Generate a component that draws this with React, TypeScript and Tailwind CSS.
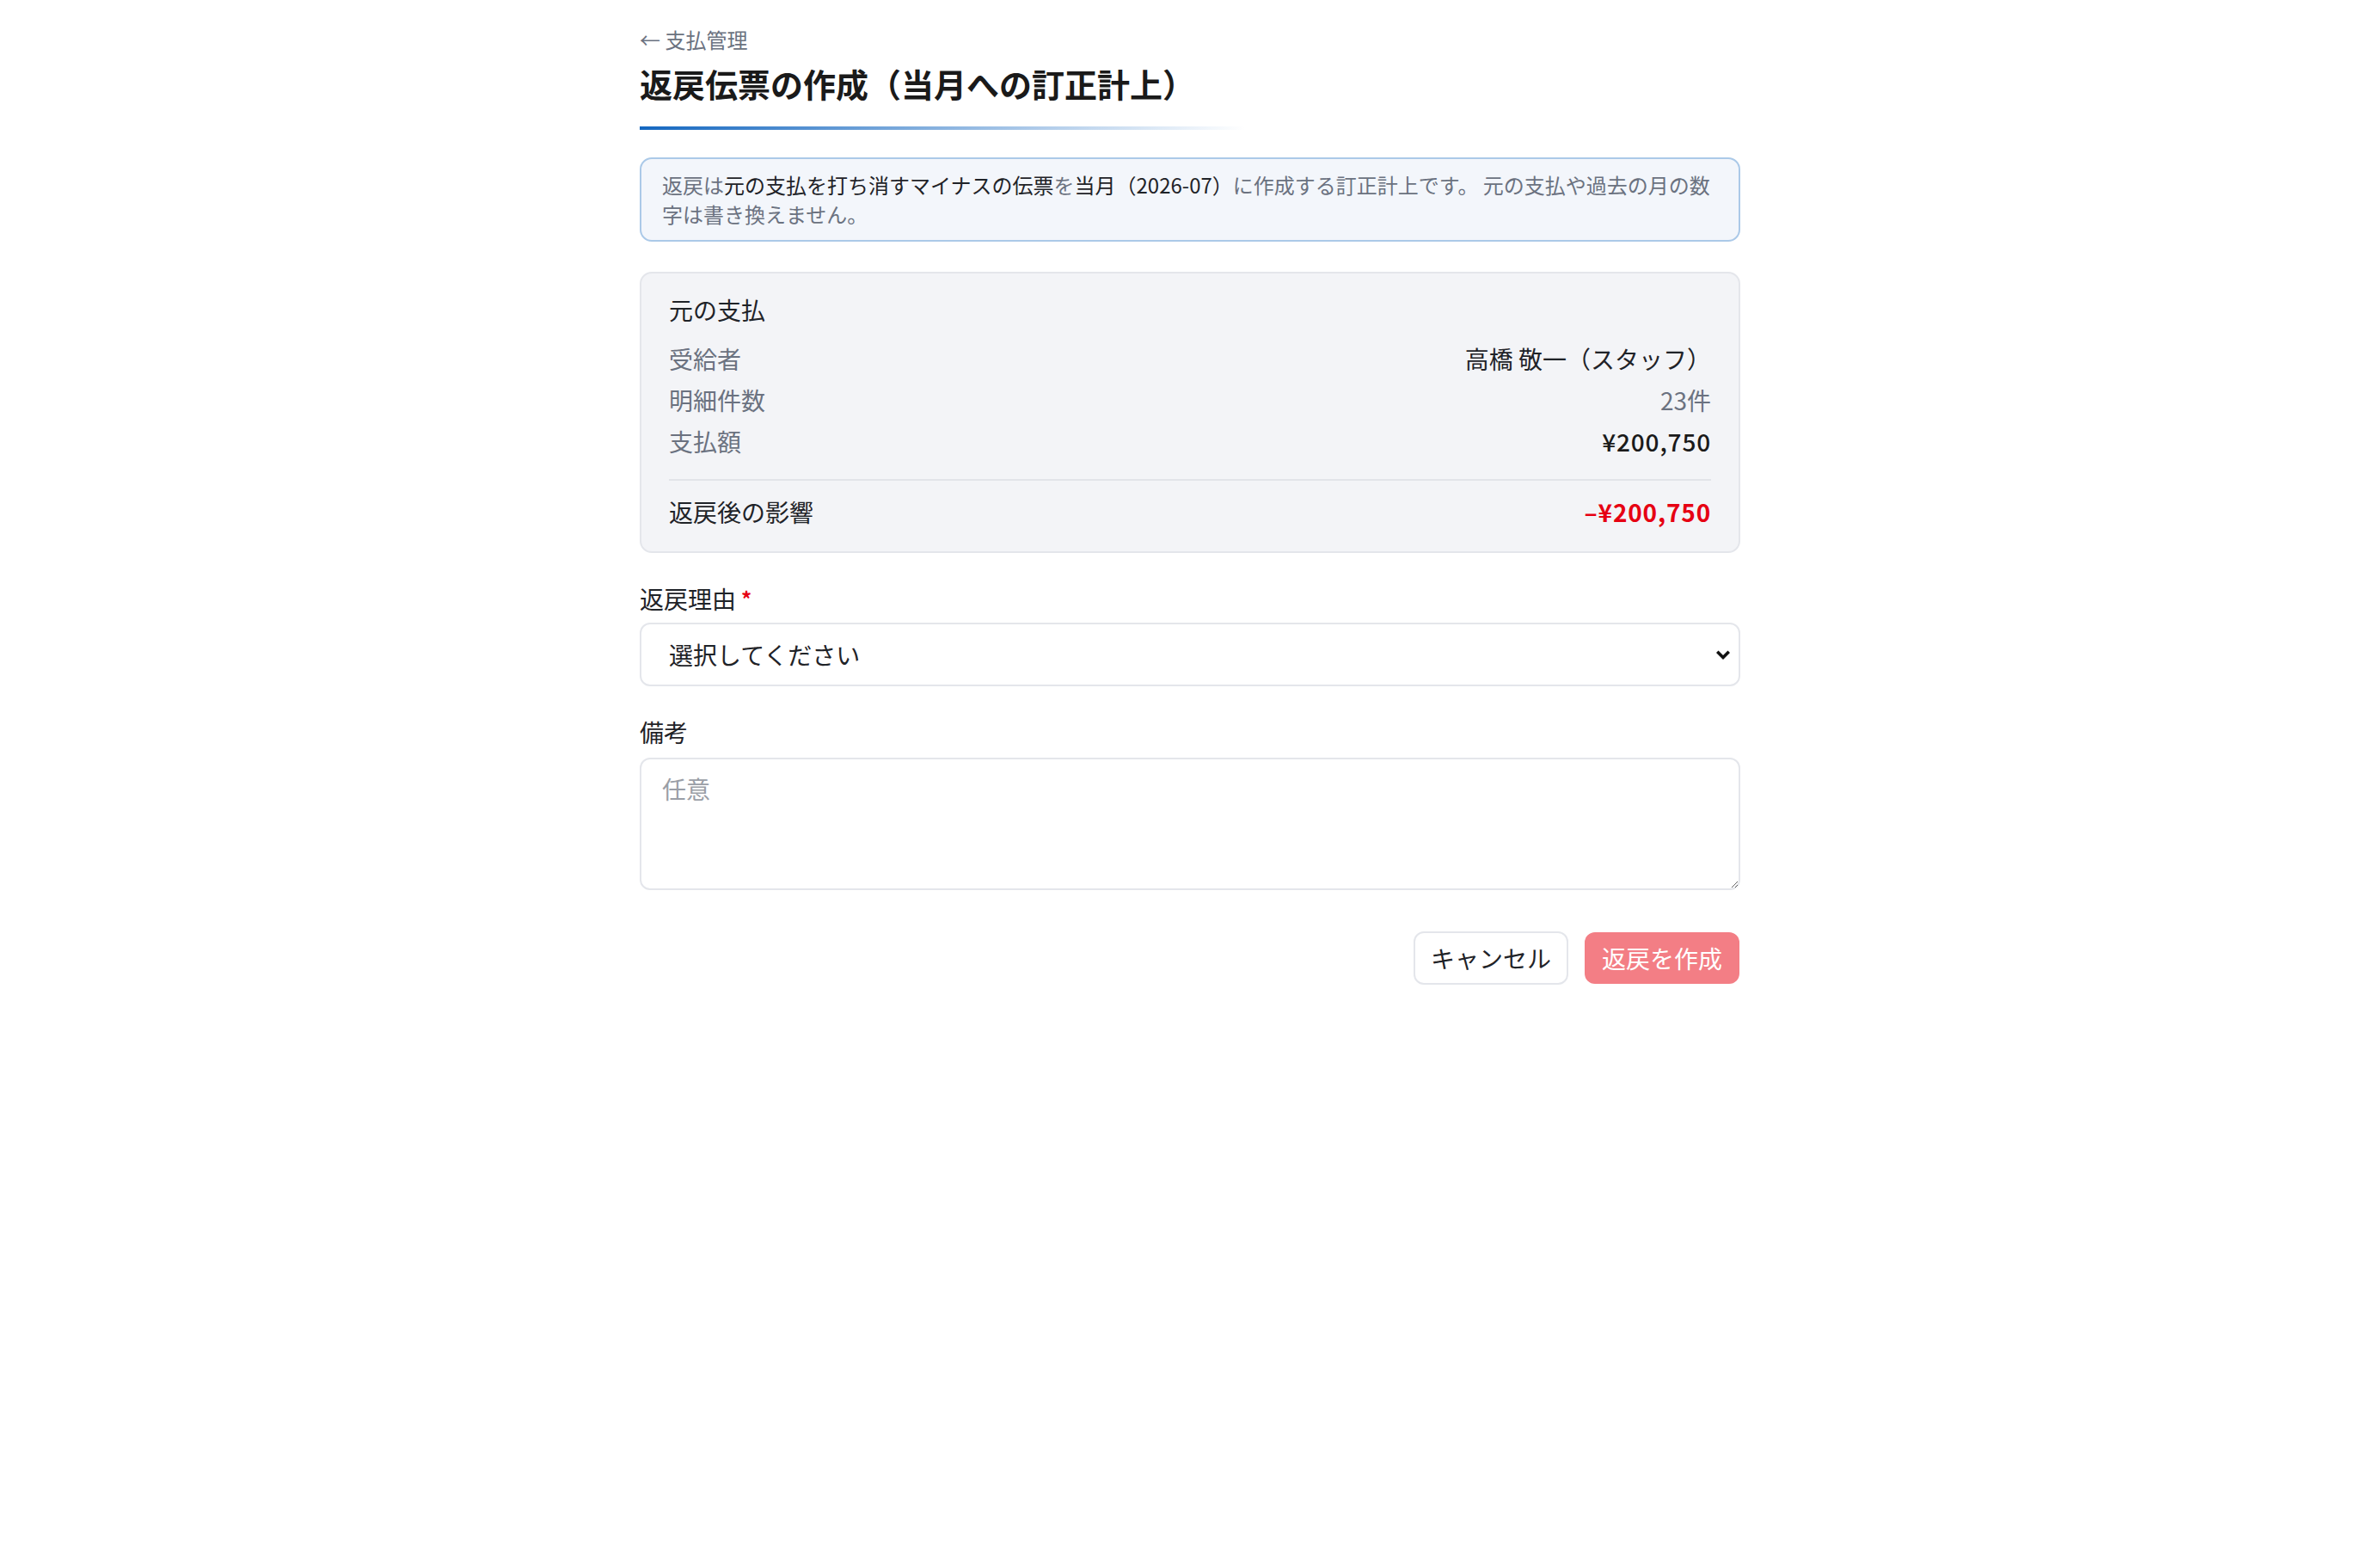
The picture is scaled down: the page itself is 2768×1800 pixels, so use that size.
import { useState } from 'react'

const FONT = { fontFamily: '"Noto Sans CJK JP", "Noto Sans", sans-serif' }

function DetailRow({ label, value, valueClass }: { label: string; value: string; valueClass: string }) {
  return (
    <div className="flex h-12 items-center justify-between">
      <span className="text-[#6b7280]">{label}</span>
      <span className={valueClass}>{value}</span>
    </div>
  )
}

export default function App() {
  const [reason, setReason] = useState('')
  const [memo, setMemo] = useState('')

  return (
    <div className="min-h-screen bg-white text-[#1f2328]" style={FONT}>
      <div className="mx-auto w-[1280px] pt-[30px]">
        {/* Header */}
        <a href="#" className="block text-[24px] leading-[32px] text-[#6b7280]">
          ← 支払管理
        </a>
        <h1 className="mt-[10px] text-[38px] font-bold leading-[50px] text-[#1a1a1a]">
          返戻伝票の作成（当月への訂正計上）
        </h1>
        <div className="mt-[25px] h-[4px] w-[704px] bg-linear-to-r from-[#1467c0] to-transparent" />

        {/* Notice */}
        <div className="mt-[32px] rounded-[14px] border-2 border-[#abc9e8] bg-[#f3f6fb] px-6 py-[13px] text-[24px] leading-[34px] text-[#6b7280]">
          返戻は<span className="text-[#1f2328]">元の支払を打ち消すマイナスの伝票</span>を<span className="text-[#1f2328]">当月（2026-07）</span>に作成する訂正計上です。 元の支払や過去の月の数字は書き換えません。
        </div>

        {/* Original payment */}
        <div className="mt-[35px] rounded-[14px] border-2 border-[#e4e6eb] bg-[#f3f4f7] px-8 pt-[26px] pb-[22px] text-[28px]">
          <p className="leading-[32px]">元の支払</p>
          <div className="mt-[17px]">
            <DetailRow label="受給者" value="高橋 敬一（スタッフ）" valueClass="text-[#1f2328]" />
            <DetailRow label="明細件数" value="23件" valueClass="text-[#6b7280]" />
            <DetailRow
              label="支払額"
              value="¥200,750"
              valueClass="font-medium tracking-[0.03em] text-[#1a1a1a]"
            />
          </div>
          <div className="mt-[20px] h-[2px] bg-[#e2e4e9]" />
          <div className="mt-[12px] flex h-12 items-center justify-between">
            <span>返戻後の影響</span>
            <span className="font-bold tracking-[0.03em] text-[#e60012]">–¥200,750</span>
          </div>
        </div>

        {/* Reason */}
        <label className="mt-[33px] flex items-center text-[28px] leading-[40px]">
          返戻理由
          <span className="ml-[6px] text-[24px] font-bold text-[#e60012]">*</span>
        </label>
        <div className="relative mt-[8px]">
          <select
            value={reason}
            onChange={(e) => setReason(e.target.value)}
            className="h-[74px] w-full appearance-none rounded-[12px] border-2 border-[#e4e6eb] bg-white px-8 text-[28px] text-[#1f2328] focus:outline-none"
          >
            <option value="">選択してください</option>
            <option value="duplicate">二重支払</option>
            <option value="amount">金額誤り</option>
            <option value="other">その他</option>
          </select>
          <svg
            className="pointer-events-none absolute right-[12px] top-[32px] h-[12px] w-[16px]"
            viewBox="0 0 16 12"
            fill="none"
            stroke="#111"
            strokeWidth="3.6"
            strokeLinecap="square"
          >
            <path d="M2.5 3 L8 8.5 L13.5 3" />
          </svg>
        </div>

        {/* Memo */}
        <label className="mt-[33px] block text-[28px] leading-[40px]">備考</label>
        <textarea
          value={memo}
          onChange={(e) => setMemo(e.target.value)}
          placeholder="任意"
          className="mt-[10px] block h-[154px] w-full rounded-[12px] border-2 border-[#e4e6eb] bg-white px-6 pt-[14px] text-[28px] leading-[40px] placeholder:text-[#9a9ea6] focus:outline-none"
        />

        {/* Actions */}
        <div className="mt-[48px] flex justify-end gap-[19px] pr-[1px]">
          <button className="h-[62px] w-[180px] rounded-[12px] border-2 border-[#e4e6eb] bg-white text-[28px] text-[#1f2328]">
            キャンセル
          </button>
          <button
            disabled
            className="mt-[1px] h-[60px] w-[180px] rounded-[12px] bg-[#f37e85] text-[28px] text-white"
          >
            返戻を作成
          </button>
        </div>
      </div>
    </div>
  )
}
